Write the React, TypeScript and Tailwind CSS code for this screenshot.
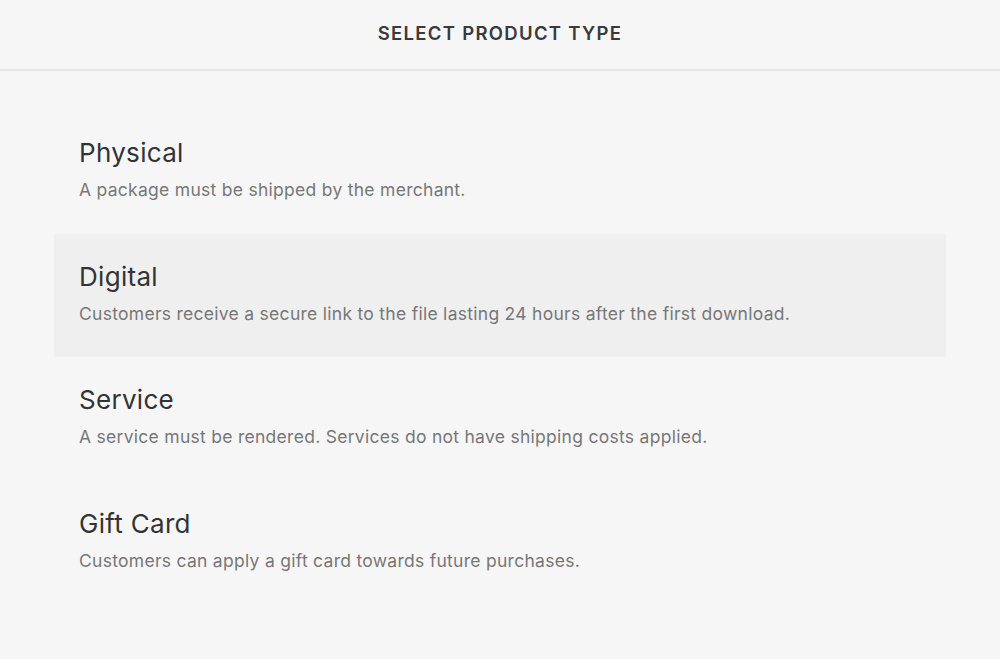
const PRODUCT_TYPES = [
  { name: 'Physical', description: 'A package must be shipped by the merchant.' },
  { name: 'Digital', description: 'Customers receive a secure link to the file lasting 24 hours after the first download.' },
  { name: 'Service', description: 'A service must be rendered. Services do not have shipping costs applied.' },
  { name: 'Gift Card', description: 'Customers can apply a gift card towards future purchases.' },
];

const App = () => {
  const selected = 'Digital';

  return (
    <div
      className="min-h-[659px] bg-[#f6f6f6] text-[#333]"
      style={{ fontFamily: 'Inter, "Liberation Sans", sans-serif' }}
    >
      <header className="h-[71px] flex items-center justify-center border-b-2 border-[#e6e6e6]">
        <h1 className="text-[18.5px] font-semibold tracking-[1.3px] text-[#3a3a3a] uppercase pb-[2px]">
          Select Product Type
        </h1>
      </header>

      <div className="px-[54px] pt-[39px]">
        {PRODUCT_TYPES.map((type) => (
          <button
            key={type.name}
            type="button"
            className={`w-full h-[123.5px] flex flex-col justify-start pt-[27px] px-[25px] text-left ${
              type.name === selected ? 'bg-[#efefef]' : ''
            }`}
          >
            <span className="text-[26px] leading-[32px] text-[#333] tracking-[0.3px]">{type.name}</span>
            <span className="mt-[10px] text-[17.5px] leading-[22px] text-[#777] tracking-[0.28px]">
              {type.description}
            </span>
          </button>
        ))}
      </div>
    </div>
  );
};

export default App;
